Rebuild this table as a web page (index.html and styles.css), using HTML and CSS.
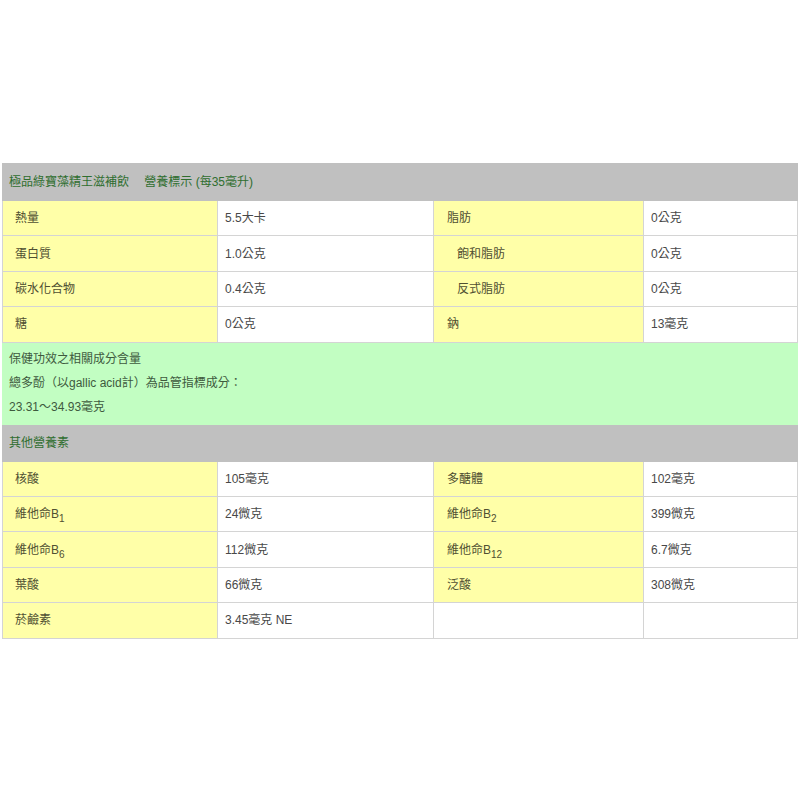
FILE: index.html
```html
<!DOCTYPE html>
<html lang="zh-Hant">
<head>
<meta charset="utf-8">
<link rel="stylesheet" href="styles.css">
</head>
<body>
<div class="page">
<table class="nutri">
<colgroup>
<col class="c1"><col class="c2"><col class="c3"><col class="c4">
</colgroup>
<tr class="head"><td colspan="4">極品綠寶藻精王滋補飲　 營養標示 (每35毫升)</td></tr>
<tr class="row"><td class="lab">熱量</td><td class="val">5.5大卡</td><td class="lab lab2">脂肪</td><td class="val">0公克</td></tr>
<tr class="row"><td class="lab">蛋白質</td><td class="val">1.0公克</td><td class="lab lab2 sub">飽和脂肪</td><td class="val">0公克</td></tr>
<tr class="row"><td class="lab">碳水化合物</td><td class="val">0.4公克</td><td class="lab lab2 sub">反式脂肪</td><td class="val">0公克</td></tr>
<tr class="row"><td class="lab">糖</td><td class="val">0公克</td><td class="lab lab2">鈉</td><td class="val">13毫克</td></tr>
<tr class="health"><td colspan="4">保健功效之相關成分含量<br>總多酚（以gallic acid計）為品管指標成分：<br>23.31～34.93毫克</td></tr>
<tr class="head"><td colspan="4">其他營養素</td></tr>
<tr class="row"><td class="lab">核酸</td><td class="val">105毫克</td><td class="lab lab2">多醣體</td><td class="val">102毫克</td></tr>
<tr class="row"><td class="lab">維他命B<sub>1</sub></td><td class="val">24微克</td><td class="lab lab2">維他命B<sub>2</sub></td><td class="val">399微克</td></tr>
<tr class="row"><td class="lab">維他命B<sub>6</sub></td><td class="val">112微克</td><td class="lab lab2">維他命B<sub>12</sub></td><td class="val">6.7微克</td></tr>
<tr class="row"><td class="lab">葉酸</td><td class="val">66微克</td><td class="lab lab2">泛酸</td><td class="val">308微克</td></tr>
<tr class="row"><td class="lab">菸鹼素</td><td class="val">3.45毫克 NE</td><td class="val"></td><td class="val"></td></tr>
</table>
</div>
</body>
</html>
```
FILE: styles.css
```css
html, body {
  margin: 0;
  padding: 0;
  background: #ffffff;
}
.page {
  padding: 163px 2px 0 2px;
  font-family: "Liberation Sans", "Noto Sans CJK TC", sans-serif;
  font-size: 12px;
  color: #444444;
}
.nutri {
  width: 795px;
  border-collapse: collapse;
  table-layout: fixed;
  border: 1px solid #c8c8c8;
}
.c1 { width: 215px; }
.c2 { width: 216px; }
.c3 { width: 210px; }
.c4 { width: 154px; }
.nutri td {
  border: 1px solid #d4d4d4;
  padding: 0 7px 3px 7px;
  vertical-align: middle;
}
.head td {
  background: #c0c0c0;
  color: #2f6e2f;
  height: 33px;
  padding: 0 6px 3px 6px;
  border-color: #c0c0c0;
}
.row td {
  height: 31.4px;
}
.lab {
  background: #ffffa8;
  color: #505032;
}
.nutri td.lab { padding-left: 12px; }
.nutri td.lab2 { padding-left: 13px; }
.nutri td.sub { padding-left: 23px; }
.val {
  background: #ffffff;
  color: #484848;
}
.health td {
  background: #c2fec2;
  color: #3e5a3e;
  line-height: 24px;
  padding: 4px 6px 5px 6px;
  border-color: #c2fec2;
}
sub {
  font-size: 10px;
  vertical-align: -4px;
  line-height: 0;
}
```
